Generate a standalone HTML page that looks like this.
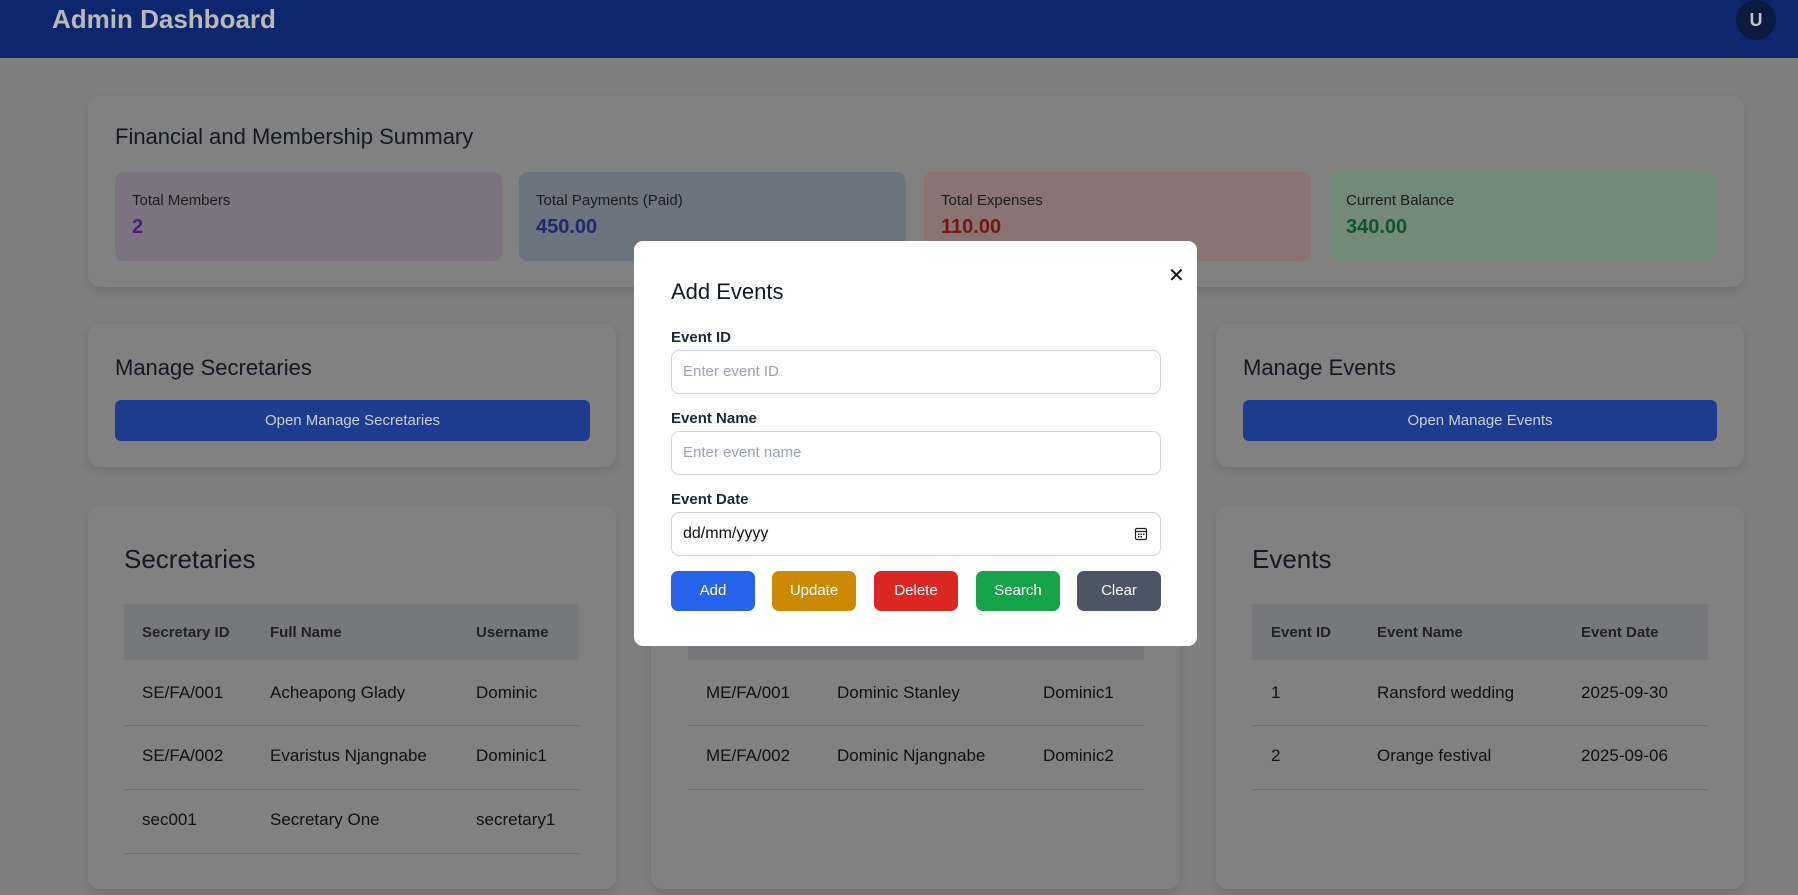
<!DOCTYPE html>
<html><head><meta charset="utf-8"><style>
*{box-sizing:border-box;margin:0;padding:0}
body{width:1798px;height:895px;overflow:hidden;background:#7f7f7f;font-family:"Liberation Sans","DejaVu Sans",sans-serif;color:#111;position:relative}
.a{position:absolute}
.hdr{left:0;top:0;width:1798px;height:58px;background:#0e266e}
.card{background:#818181;border-radius:12px;box-shadow:0 4px 10px rgba(0,0,0,.12)}
.h2{font-size:22px;color:#141820}
.stat{border-radius:9px;height:89px;width:387px;top:172px}
.stat .l{position:absolute;left:17px;top:20px;font-size:15px;color:#1c1c1c}
.stat .v{position:absolute;left:17px;top:44px;font-size:20px;font-weight:bold}
.btn{background:#1d3c8e;color:#c9cfd9;border-radius:6px;font-size:15px;text-align:center;line-height:41px;height:41px}
.th{background:#76787c;height:56px}
.t{font-size:17px;color:#111;white-space:nowrap}
.tb{font-size:15px;color:#222;font-weight:bold;white-space:nowrap}
.ln{height:1px;background:#6e6e6e}
.modal{left:634px;top:241px;width:563px;height:405px;background:#fff;border-radius:9px}
.lab{font-size:15px;color:#1f2937;font-weight:bold}
.inp{left:37px;width:490px;height:44px;border:1px solid #d1d5db;border-radius:8px;font-size:15px;color:#9ca3af;padding-left:11px;line-height:42px}
.mb{top:330px;width:84px;height:40px;border-radius:7px;color:#fff;font-size:15px;text-align:center;line-height:40px}
</style></head><body>
<div class="a hdr"></div>
<div class="a" style="left:52px;top:4px;font-size:26px;font-weight:bold;color:#b9b9b9">Admin Dashboard</div>
<div class="a" style="left:1736px;top:0;width:40px;height:40px;border-radius:50%;background:#0b1a3e;color:#bfc3cc;font-weight:bold;font-size:18px;text-align:center;line-height:40px">U</div>

<div class="a card" style="left:88px;top:96px;width:1656px;height:191px"></div>
<div class="a h2" style="left:115px;top:124px">Financial and Membership Summary</div>
<div class="a stat" style="left:115px;background:#7b7480"><div class="l">Total Members</div><div class="v" style="color:#4c1d7a">2</div></div>
<div class="a stat" style="left:519px;background:#6c7480"><div class="l">Total Payments (Paid)</div><div class="v" style="color:#1e2a6b">450.00</div></div>
<div class="a stat" style="left:924px;background:#8a7473"><div class="l">Total Expenses</div><div class="v" style="color:#7a1414">110.00</div></div>
<div class="a stat" style="left:1329px;background:#728a77"><div class="l">Current Balance</div><div class="v" style="color:#14532d">340.00</div></div>

<div class="a card" style="left:88px;top:324px;width:528px;height:143px"></div>
<div class="a card" style="left:651px;top:324px;width:529px;height:143px"></div>
<div class="a card" style="left:1216px;top:324px;width:528px;height:143px"></div>
<div class="a h2" style="left:115px;top:355px">Manage Secretaries</div>
<div class="a btn" style="left:115px;top:400px;width:475px">Open Manage Secretaries</div>
<div class="a h2" style="left:1243px;top:355px">Manage Events</div>
<div class="a btn" style="left:1243px;top:400px;width:474px">Open Manage Events</div>

<div class="a card" style="left:88px;top:506px;width:528px;height:383px"></div>
<div class="a card" style="left:651px;top:506px;width:529px;height:383px"></div>
<div class="a card" style="left:1216px;top:506px;width:528px;height:383px"></div>

<div class="a" style="left:124px;top:544px;font-size:26px;color:#141820">Secretaries</div>
<div class="a th" style="left:124px;top:604px;width:455px"></div>
<div class="a tb" style="left:142px;top:624px">Secretary ID</div>
<div class="a tb" style="left:270px;top:624px">Full Name</div>
<div class="a tb" style="left:476px;top:624px">Username</div>
<div class="a t" style="left:142px;top:683px">SE/FA/001</div><div class="a t" style="left:270px;top:683px">Acheapong Glady</div><div class="a t" style="left:476px;top:683px">Dominic</div>
<div class="a ln" style="left:124px;top:725px;width:455px"></div>
<div class="a t" style="left:142px;top:746px">SE/FA/002</div><div class="a t" style="left:270px;top:746px">Evaristus Njangnabe</div><div class="a t" style="left:476px;top:746px">Dominic1</div>
<div class="a ln" style="left:124px;top:789px;width:455px"></div>
<div class="a t" style="left:142px;top:810px">sec001</div><div class="a t" style="left:270px;top:810px">Secretary One</div><div class="a t" style="left:476px;top:810px">secretary1</div>
<div class="a ln" style="left:124px;top:853px;width:455px"></div>

<div class="a th" style="left:688px;top:604px;width:456px"></div>
<div class="a t" style="left:706px;top:683px">ME/FA/001</div><div class="a t" style="left:837px;top:683px">Dominic Stanley</div><div class="a t" style="left:1043px;top:683px">Dominic1</div>
<div class="a ln" style="left:688px;top:725px;width:456px"></div>
<div class="a t" style="left:706px;top:746px">ME/FA/002</div><div class="a t" style="left:837px;top:746px">Dominic Njangnabe</div><div class="a t" style="left:1043px;top:746px">Dominic2</div>
<div class="a ln" style="left:688px;top:789px;width:456px"></div>

<div class="a" style="left:1252px;top:544px;font-size:26px;color:#141820">Events</div>
<div class="a th" style="left:1252px;top:604px;width:456px"></div>
<div class="a tb" style="left:1271px;top:624px">Event ID</div>
<div class="a tb" style="left:1377px;top:624px">Event Name</div>
<div class="a tb" style="left:1581px;top:624px">Event Date</div>
<div class="a t" style="left:1271px;top:683px">1</div><div class="a t" style="left:1377px;top:683px">Ransford wedding</div><div class="a t" style="left:1581px;top:683px">2025-09-30</div>
<div class="a ln" style="left:1252px;top:725px;width:456px"></div>
<div class="a t" style="left:1271px;top:746px">2</div><div class="a t" style="left:1377px;top:746px">Orange festival</div><div class="a t" style="left:1581px;top:746px">2025-09-06</div>
<div class="a ln" style="left:1252px;top:789px;width:456px"></div>

<div class="a modal">
 <div class="a" style="left:37px;top:38px;font-size:22px;color:#111827">Add Events</div>
 <div class="a" style="left:534px;top:22px;font-size:20px;color:#111">✕</div>
 <div class="a lab" style="left:37px;top:88px">Event ID</div>
 <div class="a inp" style="top:109px">Enter event ID</div>
 <div class="a lab" style="left:37px;top:169px">Event Name</div>
 <div class="a inp" style="top:190px">Enter event name</div>
 <div class="a lab" style="left:37px;top:250px">Event Date</div>
 <div class="a inp" style="top:271px;color:#111;font-size:16px">dd/mm/yyyy
  <svg class="a" style="right:12px;top:14px" width="14" height="14" viewBox="0 0 14 14"><rect x="1.5" y="1.5" width="11" height="11" rx="1.5" fill="none" stroke="#222" stroke-width="1.2"/><line x1="1.5" y1="4.5" x2="12.5" y2="4.5" stroke="#222" stroke-width="1.2"/><rect x="4" y="6.5" width="1.5" height="1.5" fill="#222"/><rect x="6.5" y="6.5" width="1.5" height="1.5" fill="#222"/><rect x="9" y="6.5" width="1.5" height="1.5" fill="#222"/><rect x="4" y="9" width="1.5" height="1.5" fill="#222"/><rect x="6.5" y="9" width="1.5" height="1.5" fill="#222"/></svg>
 </div>
 <div class="a mb" style="left:37px;background:#2563eb">Add</div>
 <div class="a mb" style="left:138px;background:#ca8a04">Update</div>
 <div class="a mb" style="left:240px;background:#dc2626">Delete</div>
 <div class="a mb" style="left:342px;background:#16a34a">Search</div>
 <div class="a mb" style="left:443px;background:#4b5563">Clear</div>
</div>
</body></html>
